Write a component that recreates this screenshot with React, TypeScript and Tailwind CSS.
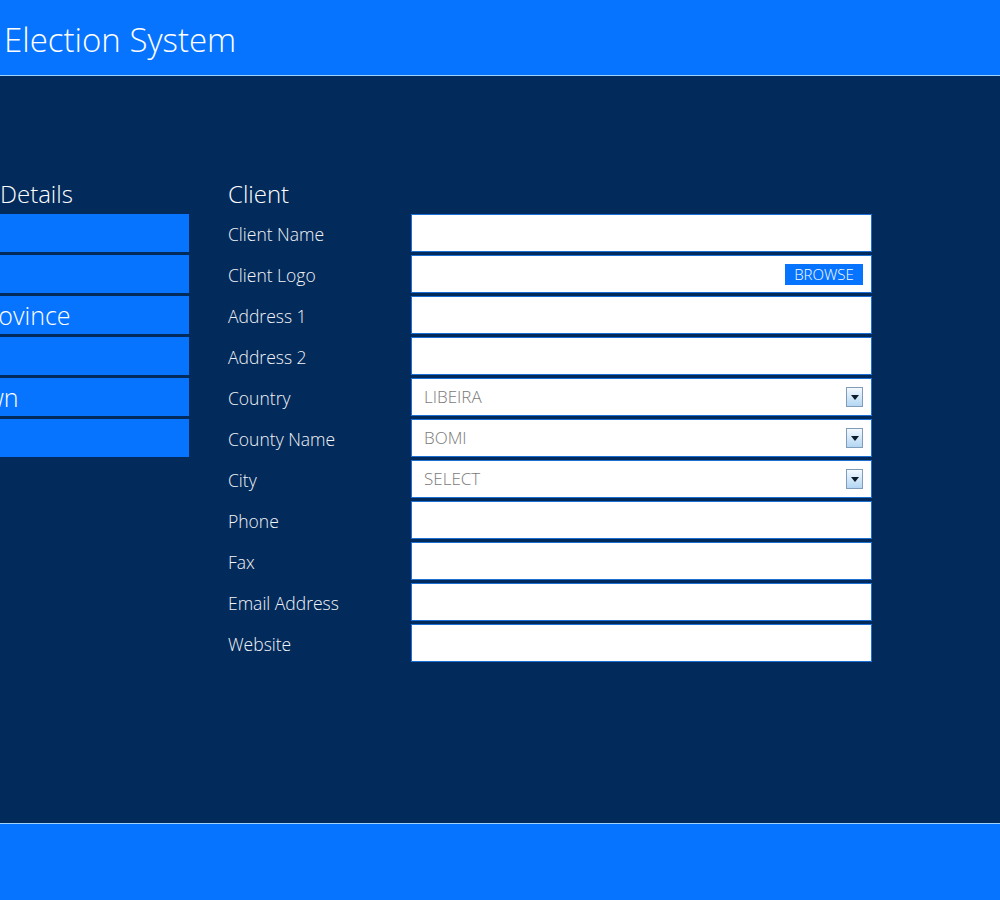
import React from "react";

const font = { fontFamily: '"Segoe UI", "Open Sans", "Noto Sans", sans-serif' };

type Field = { label: string; kind: "text" | "browse" | "select"; value?: string };

const fields: Field[] = [
  { label: "Client Name", kind: "text" },
  { label: "Client Logo", kind: "browse" },
  { label: "Address 1", kind: "text" },
  { label: "Address 2", kind: "text" },
  { label: "Country", kind: "select", value: "LIBEIRA" },
  { label: "County Name", kind: "select", value: "BOMI" },
  { label: "City", kind: "select", value: "SELECT" },
  { label: "Phone", kind: "text" },
  { label: "Fax", kind: "text" },
  { label: "Email Address", kind: "text" },
  { label: "Website", kind: "text" },
];

const leftItems: { t: string; cls: string }[] = [
  { t: "", cls: "" },
  { t: "", cls: "" },
  { t: "Province", cls: "-ml-[26px]" },
  { t: "", cls: "" },
  { t: "Town", cls: "-ml-[42px]" },
  { t: "", cls: "" },
];

function DropArrow() {
  return (
    <div className="flex h-[20px] w-[17px] items-center justify-center border border-[#7f9db9] bg-gradient-to-b from-[#f4f9fe] to-[#b3d6f3]">
      <svg width="8" height="5" viewBox="0 0 8 5">
        <path d="M0 0 L8 0 L4 5 Z" fill="#0d1b2a" />
      </svg>
    </div>
  );
}

export default function App() {
  return (
    <div className="flex h-[900px] w-[1000px] flex-col overflow-hidden bg-[#022a5a]" style={font}>
      <header className="flex h-[76px] shrink-0 items-start border-b border-[#9fd3f7] bg-[#0774ff]">
        <h1 className="ml-[4px] mt-[18px] text-[33px] font-light leading-[44px] text-white">Election System</h1>
      </header>

      <main className="flex flex-1 pt-[102px]">
        <section className="w-[189px] shrink-0 overflow-hidden">
          <h2 className="h-[36px] text-[24px] font-light leading-[32px] text-white">Details</h2>
          <div className="flex flex-col gap-[3px]">
            {leftItems.map((it, i) => (
              <div key={i} className="flex h-[38px] items-center overflow-hidden bg-[#0774ff]">
                <span className={`${it.cls} whitespace-nowrap text-[25px] font-light leading-[32px] text-white`}>{it.t}</span>
              </div>
            ))}
          </div>
        </section>

        <section className="ml-[39px] shrink-0">
          <h2 className="h-[36px] text-[24px] font-light leading-[32px] text-white">Client</h2>
          <div className="flex flex-col gap-[3px]">
            {fields.map((f) => (
              <div key={f.label} className="flex h-[38px] items-center">
                <label className="w-[183px] shrink-0 pt-[2px] text-[17.5px] font-light leading-[24px] text-[#f2f4f8]">{f.label}</label>
                <div className="flex h-[38px] w-[461px] shrink-0 items-center border border-[#1e6fd3] bg-white pl-[12px] pr-[8px]">
                  {f.kind === "select" && (
                    <>
                      <span className="flex-1 text-[17px] font-light text-[#7a7a7a]">{f.value}</span>
                      <DropArrow />
                    </>
                  )}
                  {f.kind === "browse" && (
                    <>
                      <span className="flex-1" />
                      <button className="flex h-[21px] w-[78px] items-center justify-center bg-[#0774ff] text-[15px] font-light text-white">
                        BROWSE
                      </button>
                    </>
                  )}
                </div>
              </div>
            ))}
          </div>
        </section>
      </main>

      <footer className="h-[77px] shrink-0 border-t border-[#9fd3f7] bg-[#0774ff]" />
    </div>
  );
}
